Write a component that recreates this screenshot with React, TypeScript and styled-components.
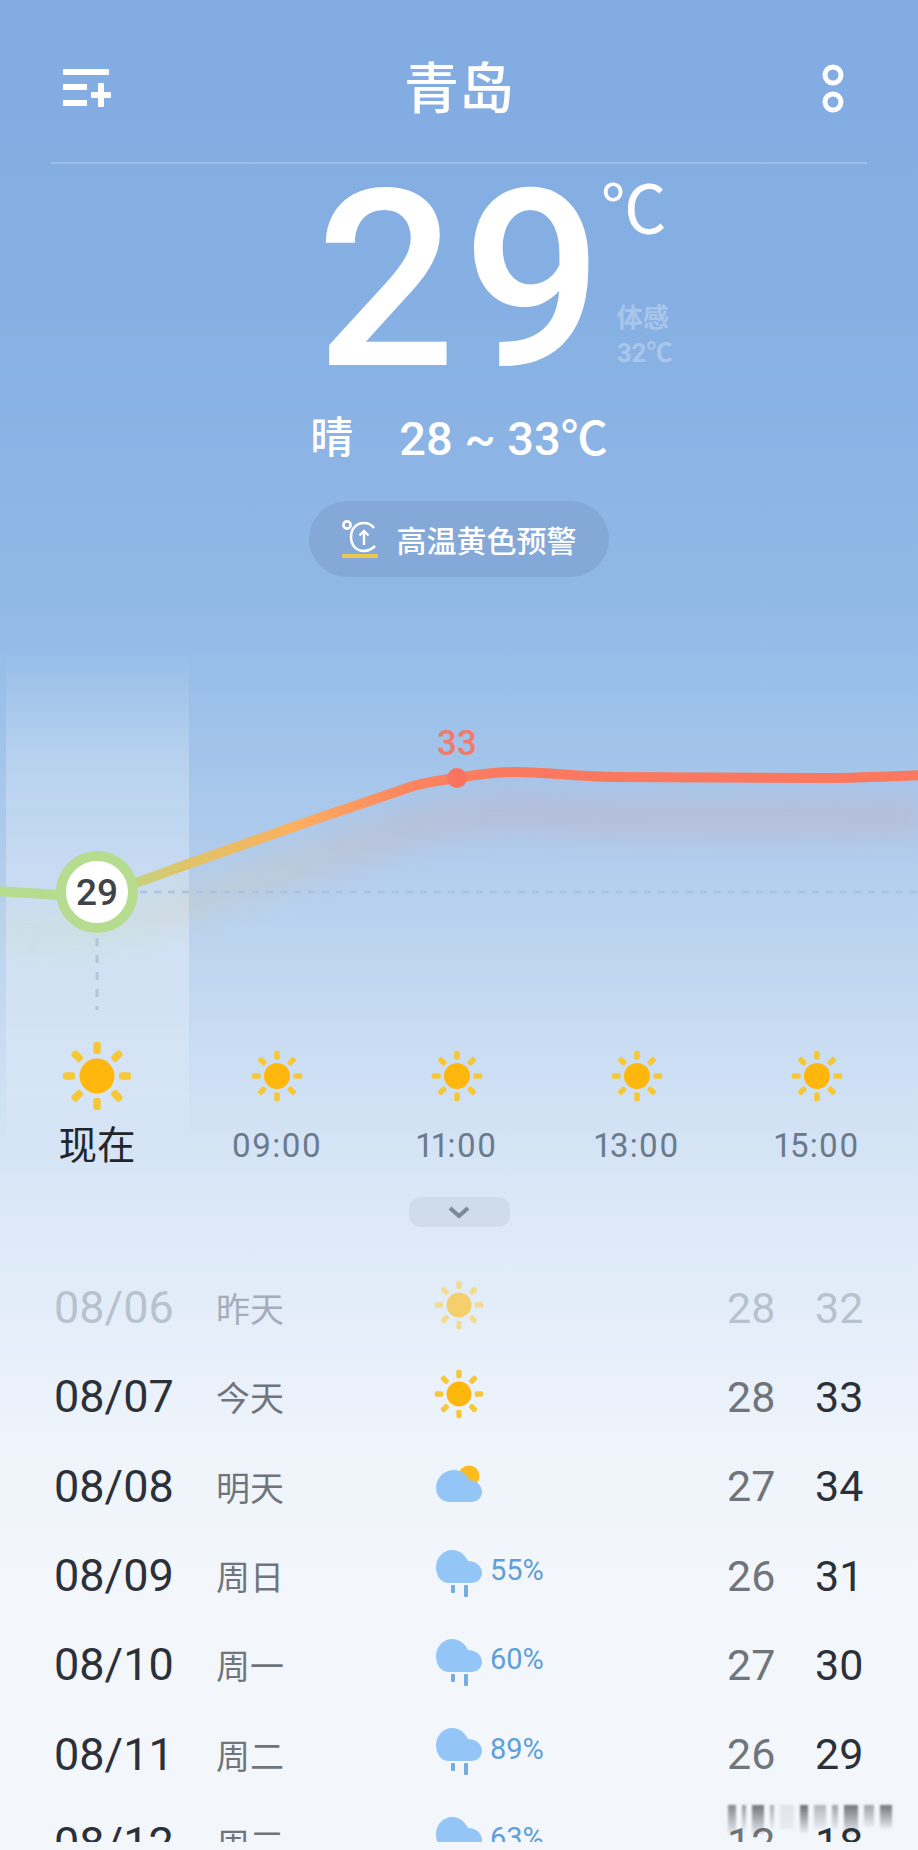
import React from "react";
import styled, { createGlobalStyle } from "styled-components";

const GlobalStyle = createGlobalStyle`
  html, body {
    margin: 0;
    padding: 0;
    background: #f3f7fc;
  }
  body {
    font-family: Roboto, "Noto Sans CJK SC", sans-serif;
  }
`;

const Page = styled.div`
  position: relative;
  width: 918px;
  height: 1850px;
  overflow: hidden;
  background: linear-gradient(
    180deg,
    #82abe2 0,
    #86afe3 300px,
    #91b9e7 600px,
    #9bc0e9 700px,
    #b7d0ee 900px,
    #d0e1f4 1100px,
    #deeaf8 1240px,
    #eff4fb 1450px,
    #f3f7fc 1600px
  );
`;

const Header = styled.header`
  display: grid;
  grid-template-columns: 1fr auto 1fr;
  align-items: center;
  height: 164px;
  margin: 0 51px;
  padding: 16px 22px 0 12px;
  box-sizing: border-box;
  border-bottom: 2px solid rgba(255, 255, 255, 0.22);
`;

const HeaderEnd = styled.div`
  display: flex;
  justify-content: flex-end;
`;

const City = styled.h1`
  margin: 0 0 0 10px;
  font-size: 55px;
  font-weight: 500;
  line-height: 1;
  color: #fff;
`;

const Hero = styled.div`
  display: flex;
  height: 230px;
  padding-left: 316px;
`;

const BigTemp = styled.div`
  margin-top: 2px;
  font-size: 246px;
  line-height: 230px;
  font-weight: 500;
  letter-spacing: 7px;
  color: #fff;
`;

const HeroSide = styled.div`
  display: flex;
  flex-direction: column;
  margin-left: -5px;
  padding-top: 12px;
`;

const Degree = styled.div`
  font-size: 66px;
  line-height: 70px;
  color: #fff;
  margin-left: -4px;
`;

const Feels = styled.div`
  margin: 55px 0 0 12px;
  font-size: 26px;
  line-height: 35px;
  font-weight: 700;
  color: rgba(255, 255, 255, 0.3);
`;

const Summary = styled.div`
  display: flex;
  align-items: center;
  justify-content: center;
  gap: 46px;
  height: 60px;
  margin-top: 10px;
  color: #fff;
  font-weight: 500;
`;

const SummaryWeather = styled.span`
  font-size: 43px;
`;

const SummaryRange = styled.span`
  font-size: 47px;
`;

const Alert = styled.div`
  display: flex;
  align-items: center;
  justify-content: center;
  gap: 19px;
  width: 300px;
  height: 76px;
  margin: 37px auto 0;
  border-radius: 38px;
  background: #84a9d8;
  font-size: 30px;
  font-weight: 500;
  color: #fff;
`;

const Forecast = styled.section`
  position: relative;
  margin-top: 71px;
`;

const Highlight = styled.div`
  position: absolute;
  left: 6px;
  top: 0;
  width: 183px;
  height: 500px;
  background: linear-gradient(
    180deg,
    rgba(255, 255, 255, 0) 0,
    rgba(255, 255, 255, 0.22) 110px,
    rgba(255, 255, 255, 0.3) 300px,
    rgba(255, 255, 255, 0.14) 450px,
    rgba(255, 255, 255, 0) 500px
  );
`;

const Chart = styled.svg`
  position: relative;
  display: block;
  width: 918px;
  height: 393px;
`;

const Hours = styled.div`
  position: relative;
  display: grid;
  grid-template-columns: repeat(5, 180px);
  padding-left: 7px;
`;

const Hour = styled.div`
  display: flex;
  flex-direction: column;
  align-items: center;
`;

const HourIcon = styled.div`
  display: flex;
  align-items: center;
  justify-content: center;
  height: 70px;
`;

const HourLabel = styled.div<{ $now?: boolean }>`
  margin-top: 12px;
  font-size: ${(p) => (p.$now ? "38.5px" : "33px")};
  font-feature-settings: "pnum";
  letter-spacing: ${(p) => (p.$now ? "0" : "1.2px")};
  line-height: 46px;
  color: ${(p) => (p.$now ? "#22262c" : "#6b7a8c")};
`;

const Expand = styled.div`
  display: flex;
  align-items: center;
  justify-content: center;
  width: 101px;
  height: 30px;
  margin: 28px auto 0;
  border-radius: 12px;
  background: #cfdcec;
`;

const List = styled.div`
  height: 579px;
  margin-top: 36px;
  overflow: hidden;
`;

const Row = styled.div`
  display: grid;
  grid-template-columns: 162px 220px 291px 88px 1fr;
  align-items: center;
  height: 89.3px;
  padding-left: 54px;
`;

const DateText = styled.div<{ $faded?: boolean }>`
  font-size: 45px;
  color: ${(p) => (p.$faded ? "#b8c2cf" : "#2c3038")};
`;

const DayText = styled.div<{ $faded?: boolean }>`
  font-size: 34px;
  color: ${(p) => (p.$faded ? "#a4adb9" : "#70757c")};
`;

const Conditions = styled.div`
  display: flex;
  align-items: center;
  gap: 8px;
  height: 56px;
  margin-bottom: 5px;
`;

const ListSun = styled.div`
  display: flex;
  margin-left: -2px;
`;

const Chance = styled.span`
  margin-top: -6px;
  font-size: 29px;
  color: #5f9fd8;
`;

const LowTemp = styled.div<{ $faded?: boolean }>`
  font-size: 43px;
  color: ${(p) => (p.$faded ? "#b8c2cf" : "#70757c")};
`;

const HighTemp = styled.div<{ $faded?: boolean }>`
  font-size: 43px;
  color: ${(p) => (p.$faded ? "#b8c2cf" : "#2c3038")};
`;

const Smudge = styled.div`
  position: absolute;
  left: 728px;
  top: 1805px;
  display: flex;
  align-items: flex-start;
  gap: 6px;
  height: 36px;
  filter: blur(1.2px);
`;

const SmudgeBar = styled.i<{ $w: number; $h: number; $o: number }>`
  display: block;
  width: ${(p) => p.$w}px;
  height: ${(p) => p.$h}px;
  background: linear-gradient(180deg, rgba(60, 64, 72, ${(p) => p.$o}), rgba(60, 64, 72, 0.05));
`;

const RAYS = [0, 45, 90, 135, 180, 225, 270, 315];

function Sun({ size, faded }: { size: number; faded?: boolean }) {
  return (
    <svg width={size} height={size} viewBox="0 0 70 70">
      {RAYS.map((a) => (
        <rect
          key={a}
          x="31.25"
          y="1"
          width="7.5"
          height="12"
          rx="2.5"
          fill={faded ? "#f3dc92" : "#f6c838"}
          transform={`rotate(${a} 35 35)`}
        />
      ))}
      <circle cx="35" cy="35" r="17.5" fill={faded ? "#f5cf6c" : "#ffb70d"} />
    </svg>
  );
}

function PartlyCloudy() {
  return (
    <svg width="46" height="37" viewBox="0 0 46 37">
      <circle cx="33" cy="11" r="10.5" fill="#fbbd1d" />
      <path
        d="M14 37C6 37 0 31 0 23C0 13 8 5 18 5C25 5 30 9 33 15C40 15 46 20 46 27C46 33 41 37 35 37Z"
        fill="#93c5f7"
      />
    </svg>
  );
}

function RainCloud() {
  return (
    <svg width="46" height="47" viewBox="0 0 46 47">
      <path
        d="M13 33C5 33 0 26 0 17C0 8 7 0 16 0C24 0 29 5 32 11C40 11 46 16 46 23C46 29 41 33 35 33Z"
        fill="#93c5f7"
      />
      <rect x="15" y="35" width="4" height="8" rx="1" fill="#74aee0" />
      <rect x="28" y="35" width="4" height="12" rx="1" fill="#74aee0" />
    </svg>
  );
}

function MenuIcon() {
  return (
    <svg width="50" height="40" viewBox="0 0 50 40">
      <rect x="0" y="0" width="46" height="6" rx="1" fill="#fff" />
      <rect x="0" y="15" width="24" height="6" fill="#fff" />
      <rect x="0" y="31" width="24" height="6" fill="#fff" />
      <rect x="28" y="23" width="20" height="6" rx="1" fill="#fff" />
      <rect x="35" y="14" width="6" height="24" rx="1" fill="#fff" />
    </svg>
  );
}

function MoreIcon() {
  return (
    <svg width="24" height="50" viewBox="0 0 24 50" fill="none" stroke="#fff" strokeWidth="5">
      <circle cx="12" cy="11" r="8" />
      <circle cx="12" cy="38" r="8" />
    </svg>
  );
}

function AlertIcon() {
  return (
    <svg width="36" height="38" viewBox="0 0 36 38" fill="none" stroke="#fff" strokeWidth="2.6">
      <circle cx="5" cy="5" r="3.6" />
      <path d="M32 8C29 4 25 3 22 3C14 3 9 9 9 17C9 25 14 31 22 31C26 31 30 29 33 26" />
      <path d="M22 25V11M17.5 15.5L22 11L26.5 15.5" strokeWidth="2.4" />
      <rect x="0" y="34" width="36" height="4.5" rx="1" fill="#eac84e" stroke="none" />
    </svg>
  );
}

const CURVE =
  "M-5 893L60 897L97 897C125 890 160 876 188 866C223 853.5 258 841.5 293 829C315 821 388 797 410 789C425 784 442 782 457 780C475 777 495 774 515 774C545 774 580 779 615 779L820 780C860 780 890 778 923 777";

const HOURS = [
  { label: "现在", now: true },
  { label: "09:00" },
  { label: "11:00" },
  { label: "13:00" },
  { label: "15:00" },
];

type Day = {
  date: string;
  day: string;
  low: string;
  high: string;
  icon: "sun" | "past" | "partly" | "rain";
  chance?: string;
  faded?: boolean;
};

const DAYS: Day[] = [
  { date: "08/06", day: "昨天", low: "28", high: "32", icon: "past", faded: true },
  { date: "08/07", day: "今天", low: "28", high: "33", icon: "sun" },
  { date: "08/08", day: "明天", low: "27", high: "34", icon: "partly" },
  { date: "08/09", day: "周日", low: "26", high: "31", icon: "rain", chance: "55%" },
  { date: "08/10", day: "周一", low: "27", high: "30", icon: "rain", chance: "60%" },
  { date: "08/11", day: "周二", low: "26", high: "29", icon: "rain", chance: "89%" },
  { date: "08/12", day: "周三", low: "12", high: "18", icon: "rain", chance: "63%" },
];

const SMUDGES = [
  [8, 30, 0.6],
  [4, 26, 0.5],
  [12, 30, 0.7],
  [4, 24, 0.4],
  [14, 24, 0.1],
  [8, 28, 0.75],
  [12, 24, 0.35],
  [6, 24, 0.45],
  [14, 30, 0.7],
  [10, 22, 0.45],
  [12, 24, 0.7],
];

function DayIcon({ icon }: { icon: Day["icon"] }) {
  if (icon === "sun" || icon === "past") {
    return (
      <ListSun>
        <Sun size={50} faded={icon === "past"} />
      </ListSun>
    );
  }
  if (icon === "partly") return <PartlyCloudy />;
  return <RainCloud />;
}

export default function App() {
  return (
    <Page>
      <GlobalStyle />
      <Header>
        <MenuIcon />
        <City>青岛</City>
        <HeaderEnd>
          <MoreIcon />
        </HeaderEnd>
      </Header>

      <Hero>
        <BigTemp>29</BigTemp>
        <HeroSide>
          <Degree>℃</Degree>
          <Feels>
            体感
            <br />
            32℃
          </Feels>
        </HeroSide>
      </Hero>

      <Summary>
        <SummaryWeather>晴</SummaryWeather>
        <SummaryRange>28 ~ 33℃</SummaryRange>
      </Summary>

      <Alert>
        <AlertIcon />
        高温黄色预警
      </Alert>

      <Forecast>
        <Highlight />
        <Chart viewBox="0 650 918 393">
          <defs>
            <linearGradient id="heat" gradientUnits="userSpaceOnUse" x1="0" y1="0" x2="918" y2="0">
              <stop offset="0.11" stopColor="#b5dc8f" />
              <stop offset="0.2" stopColor="#e0c468" />
              <stop offset="0.32" stopColor="#fbb060" />
              <stop offset="0.44" stopColor="#fb8660" />
              <stop offset="0.56" stopColor="#fa7860" />
            </linearGradient>
            <filter id="soft" x="-10%" y="-100%" width="120%" height="300%">
              <feGaussianBlur stdDeviation="14" />
            </filter>
          </defs>
          <path
            d={CURVE}
            transform="translate(0 40)"
            fill="none"
            stroke="url(#heat)"
            strokeWidth="34"
            opacity="0.15"
            filter="url(#soft)"
          />
          <line x1="140" y1="894" x2="918" y2="894" stroke="#a9c3e3" strokeWidth="2.5" strokeDasharray="7 7" />
          <line x1="97" y1="940" x2="97" y2="1012" stroke="#b4c6dd" strokeWidth="3" strokeDasharray="8 9" />
          <path d={CURVE} fill="none" stroke="url(#heat)" strokeWidth="10" />
          <circle cx="97" cy="894" r="36" fill="#fff" stroke="#b5dc8f" strokeWidth="10" />
          <text
            x="97"
            y="907"
            textAnchor="middle"
            fontFamily="Roboto, sans-serif"
            fontWeight="500"
            fontSize="37"
            fill="#404347"
          >
            29
          </text>
          <circle cx="457" cy="780" r="10" fill="#f9745f" />
          <text
            x="457"
            y="757"
            textAnchor="middle"
            fontFamily="Roboto, sans-serif"
            fontWeight="500"
            fontSize="35"
            fill="#ee7b6c"
          >
            33
          </text>
        </Chart>

        <Hours>
          {HOURS.map((h) => (
            <Hour key={h.label}>
              <HourIcon>
                <Sun size={h.now ? 70 : 52} />
              </HourIcon>
              <HourLabel $now={h.now}>{h.label}</HourLabel>
            </Hour>
          ))}
        </Hours>

        <Expand>
          <svg width="22" height="13" viewBox="0 0 22 13" fill="none" stroke="#7d8a9a" strokeWidth="4">
            <path d="M2 2L11 10L20 2" />
          </svg>
        </Expand>
      </Forecast>

      <List>
        {DAYS.map((d) => (
          <Row key={d.date}>
            <DateText $faded={d.faded}>{d.date}</DateText>
            <DayText $faded={d.faded}>{d.day}</DayText>
            <Conditions>
              <DayIcon icon={d.icon} />
              {d.chance && <Chance>{d.chance}</Chance>}
            </Conditions>
            <LowTemp $faded={d.faded}>{d.low}</LowTemp>
            <HighTemp $faded={d.faded}>{d.high}</HighTemp>
          </Row>
        ))}
      </List>

      <Smudge>
        {SMUDGES.map(([w, h, o], i) => (
          <SmudgeBar key={i} $w={w} $h={h} $o={o} />
        ))}
      </Smudge>
    </Page>
  );
}
